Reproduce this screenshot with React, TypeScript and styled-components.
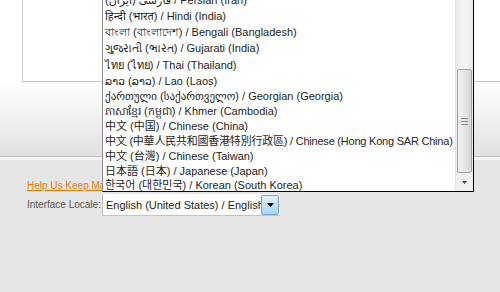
import React from "react";
import styled, { createGlobalStyle } from "styled-components";

const GlobalStyle = createGlobalStyle`
  html, body { margin: 0; padding: 0; }
  body {
    background: #e6e6e6;
    font-family: "Liberation Sans", Arial, sans-serif;
  }
`;

const Page = styled.div`
  position: relative;
  width: 500px;
  height: 292px;
  overflow: hidden;
  display: flex;
  flex-direction: column;
  background: #e6e6e6;
`;

const TopPanel = styled.div`
  height: 156px;
  background: linear-gradient(to bottom, #ffffff 0px, #ffffff 82px, #e1e1e1 156px);
  border-bottom: 1px solid #bdbdbd;
  flex-shrink: 0;
`;

const Highlight = styled.div`
  height: 3px;
  background: #f5f5f5;
  flex-shrink: 0;
`;

const TextBox = styled.div`
  margin-left: 22px;
  width: 620px;
  height: 81px;
  border-left: 1px solid #c9c9c9;
  border-bottom: 1px solid #c9c9c9;
  background: #fff;
`;

const Footer = styled.div`
  display: flex;
  flex-direction: column;
  padding: 20px 0 0 27px;
`;

const HelpLink = styled.a`
  font-size: 10px;
  line-height: 12px;
  color: #ea7601;
  text-decoration: underline;
  white-space: nowrap;
`;

const LocaleRow = styled.div`
  display: flex;
  align-items: center;
  margin-top: 2px;
`;

const Label = styled.span`
  font-size: 10px;
  color: #555;
  width: 75px;
  white-space: nowrap;
`;

const Select = styled.div`
  display: flex;
  align-items: center;
  width: 177px;
  height: 21px;
  background: #fff;
  border-left: 1px solid #bfbfbf;
  box-shadow: 0 1px 0 #c4c4c4;
`;

const SelectText = styled.span`
  flex: 1;
  font-size: 11px;
  color: #1e1e1e;
  padding-left: 3px;
  white-space: nowrap;
  overflow: hidden;
`;

const SelectButton = styled.div`
  width: 16px;
  height: 18px;
  margin-right: 1px;
  border: 1px solid #6aa6d6;
  border-radius: 2px;
  background: linear-gradient(to bottom, #e4f3fd 0%, #c4e3f9 50%, #a9d6f6 100%);
  display: flex;
  align-items: center;
  justify-content: center;
`;

const DropList = styled.div`
  position: absolute;
  left: 102px;
  top: -8px;
  width: 370px;
  height: 198px;
  display: flex;
  background: #fff;
  border: 1px solid #000;
  border-left-color: #8c8c8c;
`;

const Items = styled.ul`
  list-style: none;
  margin: 0;
  padding: 0;
  flex: 1;
  overflow: hidden;
`;

const Item = styled.li<{ $h: number; $font: string; $tight?: boolean }>`
  height: ${(p) => p.$h}px;
  line-height: ${(p) => p.$h}px;
  padding-left: 2px;
  font-size: 11px;
  color: #1e1e1e;
  white-space: nowrap;
  overflow: hidden;
  font-family: ${(p) => p.$font};
  letter-spacing: ${(p) => (p.$tight ? "-0.22px" : "0")};
`;

const Scrollbar = styled.div`
  width: 17px;
  display: flex;
  flex-direction: column;
  background: #efefef;
  border-left: 1px solid #e2e2e2;
`;

const Track = styled.div`
  flex: 1;
  background: linear-gradient(to right, #e8e8e8, #f4f4f4 40%, #f4f4f4 60%, #e8e8e8);
`;

const Thumb = styled.div`
  height: 102px;
  margin: 0 1px;
  border: 1px solid #a3a3a3;
  border-radius: 2px;
  background: linear-gradient(to right, #f1f1f1 0%, #e8e8e8 45%, #d5d5d5 100%);
  display: flex;
  align-items: center;
  justify-content: center;
`;

const DownButton = styled.div`
  height: 18px;
  display: flex;
  align-items: center;
  justify-content: center;
  background: #f0f0f0;
`;

const SANS = `"Liberation Sans", Arial, "DejaVu Sans", "Noto Sans", sans-serif`;
const SC = `"Liberation Sans", Arial, "Noto Sans CJK SC", sans-serif`;
const TC = `"Liberation Sans", Arial, "Noto Sans CJK TC", sans-serif`;
const JP = `"Liberation Sans", Arial, "Noto Sans CJK JP", sans-serif`;
const KR = `"Liberation Sans", Arial, "Noto Sans CJK KR", sans-serif`;

const rows: { text: string; h: number; font: string; tight?: boolean }[] = [
  { text: "فارسی (ایران) / Persian (Iran)", h: 15, font: SANS },
  { text: "हिन्दी (भारत) / Hindi (India)", h: 16, font: SANS },
  { text: "বাংলা (বাংলাদেশ) / Bengali (Bangladesh)", h: 16, font: SANS },
  { text: "ગુજરાતી (ભારત) / Gujarati (India)", h: 17, font: SANS },
  { text: "ไทย (ไทย) / Thai (Thailand)", h: 17, font: SANS },
  { text: "ລາວ (ລາວ) / Lao (Laos)", h: 15, font: SANS },
  { text: "ქართული (საქართველო) / Georgian (Georgia)", h: 15, font: SANS },
  { text: "ភាសាខ្មែរ (កម្ពុជា) / Khmer (Cambodia)", h: 15, font: SANS },
  { text: "中文 (中国) / Chinese (China)", h: 15, font: SC },
  { text: "中文 (中華人民共和國香港特別行政區) / Chinese (Hong Kong SAR China)", h: 15, font: TC, tight: true },
  { text: "中文 (台灣) / Chinese (Taiwan)", h: 15, font: TC },
  { text: "日本語 (日本) / Japanese (Japan)", h: 15, font: JP },
  { text: "한국어 (대한민국) / Korean (South Korea)", h: 12, font: KR },
];

const Arrow = () => (
  <svg width="7" height="4" viewBox="0 0 7 4">
    <path d="M0 0 H7 L3.5 4 Z" fill="#000" />
  </svg>
);

const SmallArrow = () => (
  <svg width="5" height="3" viewBox="0 0 5 3">
    <path d="M0 0 H5 L2.5 3 Z" fill="#444" />
  </svg>
);

const Grip = () => (
  <svg width="7" height="7" viewBox="0 0 7 7">
    <path d="M0 0.5 H7 M0 3.5 H7 M0 6.5 H7" stroke="#8a8a8a" strokeWidth="1" />
  </svg>
);

export default function App() {
  return (
    <>
      <GlobalStyle />
      <Page>
        <TopPanel>
          <TextBox />
        </TopPanel>
        <Highlight />
        <Footer>
          <HelpLink href="#">Help Us Keep Magento Healthy - Report All Bugs</HelpLink>
          <LocaleRow>
            <Label>Interface Locale:</Label>
            <Select>
              <SelectText>English (United States) / English (United States)</SelectText>
              <SelectButton>
                <Arrow />
              </SelectButton>
            </Select>
          </LocaleRow>
        </Footer>
        <DropList>
          <Items>
            {rows.map((r) => (
              <Item key={r.text} $h={r.h} $font={r.font} $tight={r.tight}>
                {r.text}
              </Item>
            ))}
          </Items>
          <Scrollbar>
            <Track />
            <Thumb>
              <Grip />
            </Thumb>
            <DownButton>
              <SmallArrow />
            </DownButton>
          </Scrollbar>
        </DropList>
      </Page>
    </>
  );
}
